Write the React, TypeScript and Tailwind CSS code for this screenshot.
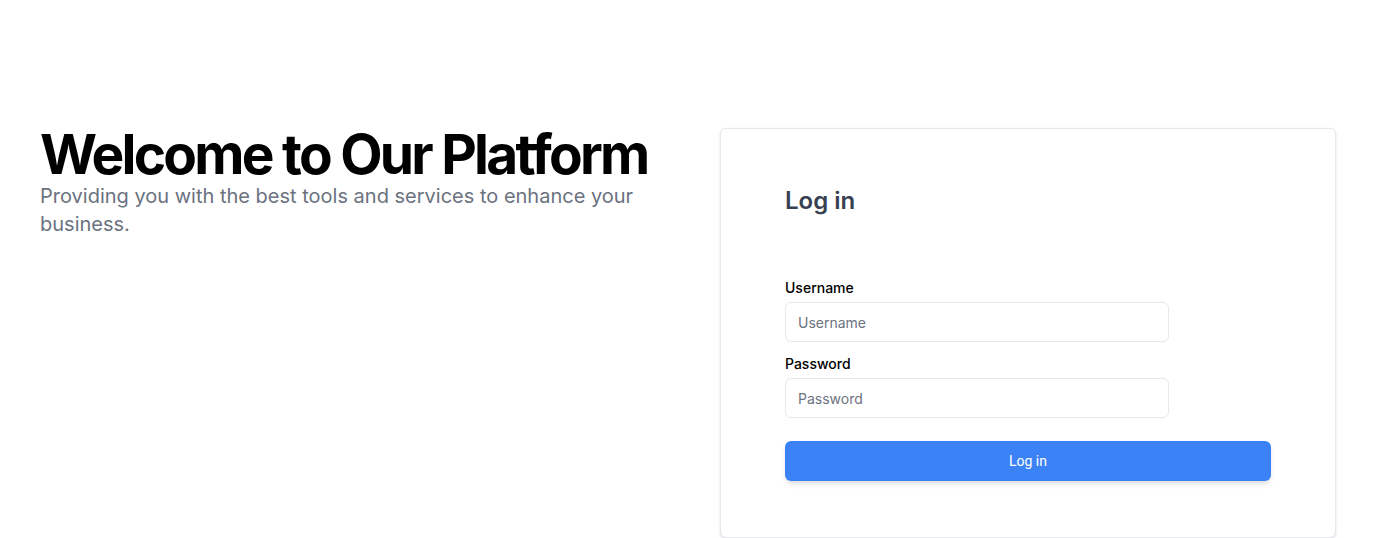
import React from 'react';

const App: React.FC = () => {
    const [username, setUsername] = React.useState('');
    const [password, setPassword] = React.useState('');

    return (
        <div className="min-h-screen bg-white font-['Inter',sans-serif]">
            <div className="flex items-start gap-10 px-10 pt-32">
                {/* Hero text */}
                <div className="flex-1">
                    <h1 className="text-[55px] leading-none font-bold tracking-tighter text-black whitespace-nowrap -mt-px">
                        Welcome to Our Platform
                    </h1>
                    <p className="text-xl leading-7 text-[#6b7280]">
                        Providing you with the best tools and services to enhance your business.
                    </p>
                </div>

                {/* Login card */}
                <div className="w-[616px] shrink-0 bg-white border border-gray-200 rounded-md shadow-sm px-16 py-14">
                    <h2 className="text-2xl leading-8 font-semibold text-[#374151]">Log in</h2>
                    <form className="mt-[61px]" onSubmit={e => e.preventDefault()}>
                        <label className="block text-sm leading-5 font-medium text-black">Username</label>
                        <input
                            type="text"
                            value={username}
                            onChange={e => setUsername(e.target.value)}
                            placeholder="Username"
                            className="mt-1 block w-full max-w-sm h-10 px-3 text-sm border border-gray-200 rounded-md placeholder:text-[#6b7280] outline-none"
                        />
                        <label className="block mt-3 text-sm leading-5 font-medium text-black">Password</label>
                        <input
                            type="password"
                            value={password}
                            onChange={e => setPassword(e.target.value)}
                            placeholder="Password"
                            className="mt-1 block w-full max-w-sm h-10 px-3 text-sm border border-gray-200 rounded-md placeholder:text-[#6b7280] outline-none"
                        />
                        <button
                            type="submit"
                            className="mt-[23px] w-full h-10 bg-[#3b82f6] text-white text-sm rounded-md shadow-md font-['Roboto',sans-serif]"
                        >
                            Log in
                        </button>
                    </form>
                </div>
            </div>
        </div>
    );
};

export default App;
